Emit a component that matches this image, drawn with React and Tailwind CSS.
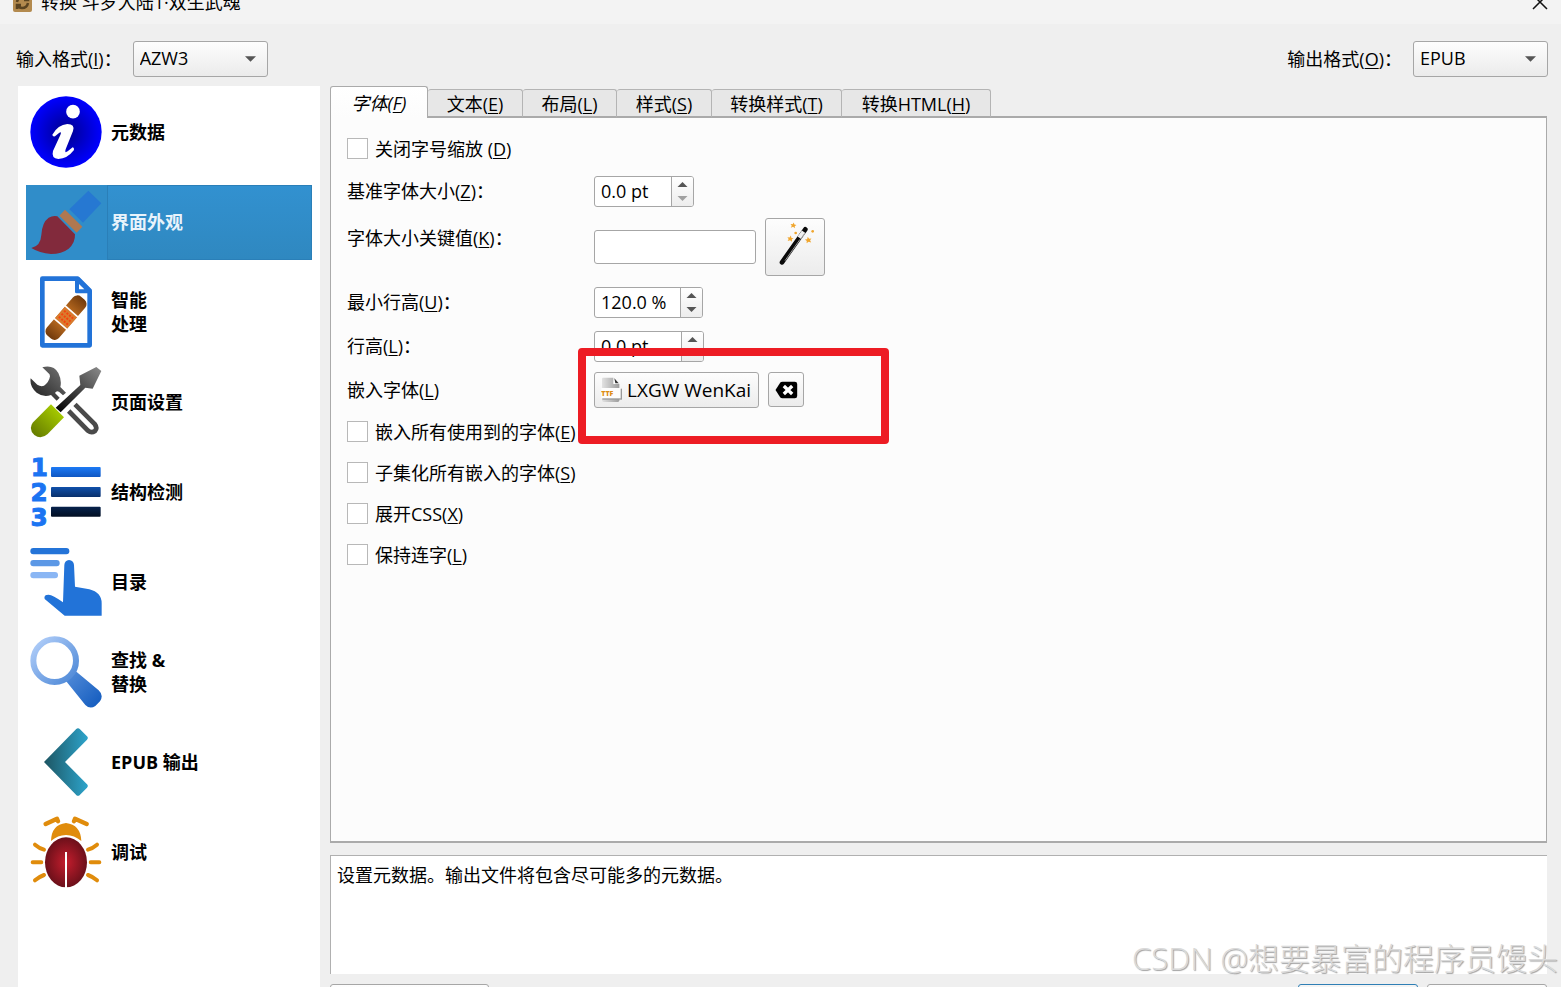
import React, { useState } from "react";

const Key = ({ children }) => (
  <span className="underline decoration-1 underline-offset-2">{children}</span>
);

const InfoIcon = () => (
  <svg viewBox="90 288 216 216" className="size-[72px] shrink-0" aria-hidden="true">
    <defs>
      <radialGradient id="info">
        <stop offset="0" stopColor="#00008c" />
        <stop offset="1" stopColor="#0000ff" />
      </radialGradient>
    </defs>
    <circle cx="198" cy="396" r="107" fill="url(#info)" />
    <circle cx="219" cy="335" r="20.500" fill="#fff" />
    <path
      fill="#fff"
      d="M157 404Q174 374 202 372Q226 372 219 393L197 448Q193 461 203 454L218 442Q223 442 222 450Q202 476 175 477Q153 475 159 453L181 405Q186 392 177 399L165 409Q158 411 157 404Z"
    />
  </svg>
);

const BrushIcon = () => (
  <svg viewBox="42 33 216 216" className="size-[72px] shrink-0" aria-hidden="true">
    <path fill="#822a3c" d="M46 219Q74 213 76 180Q78 142 98 128Q111 121 124 124L177 178Q178 204 158 221Q137 237 105 237Q70 234 46 219Z" />
    <path fill="#b07850" d="M147 104L199 155L182 173L130 122Z" />
    <path fill="#2678d2" d="M217 47L256 85L201 143L160 103Z" />
  </svg>
);

const BandageIcon = () => (
  <svg viewBox="42 303 216 216" className="size-[72px] shrink-0" aria-hidden="true">
    <defs>
      <linearGradient id="band">
        <stop offset="0" stopColor="#713a0c" />
        <stop offset="0.350" stopColor="#b8691f" />
        <stop offset="0.650" stopColor="#b8691f" />
        <stop offset="1" stopColor="#713a0c" />
      </linearGradient>
    </defs>
    <path fill="none" stroke="#2273d8" strokeWidth="14" strokeLinejoin="round" d="M79 311H185L221 347V511H79Z" />
    <path fill="#2273d8" d="M177 308H190L226 344V355H182Q177 355 177 350Z" />
    <path fill="#fff" d="M189 327L205 343H189Z" />
    <g transform="translate(150 428) rotate(-49)">
      <rect x="-77" y="-24" width="154" height="48" rx="17" fill="url(#band)" />
      <rect x="-24" y="-24" width="48" height="48" fill="#d97b2e" />
      <path stroke="#fff" strokeWidth="5" d="M-25 -26V26M25 -26V26" />
      <g stroke="#f4430e" strokeWidth="6" strokeDasharray="6 6">
        <path d="M-15 -15H15" />
        <path d="M-15 -5H17" />
        <path d="M-15 5H15" />
        <path d="M-15 15H17" />
      </g>
    </g>
  </svg>
);

const ToolsIcon = () => (
  <svg viewBox="42 33 216 216" className="size-[72px] shrink-0" aria-hidden="true">
    <defs>
      <linearGradient id="steel" x1="0" y1="1" x2="1" y2="0">
        <stop offset="0" stopColor="#1c1c1c" />
        <stop offset="1" stopColor="#777" />
      </linearGradient>
      <linearGradient id="blade" x1="0" y1="1" x2="1" y2="0">
        <stop offset="0" stopColor="#000" />
        <stop offset="0.450" stopColor="#3c3c3c" />
        <stop offset="1" stopColor="#8c8c8c" />
      </linearGradient>
      <linearGradient id="grip" x1="1" y1="0" x2="0" y2="1">
        <stop offset="0" stopColor="#b4dc00" />
        <stop offset="1" stopColor="#5f7400" />
      </linearGradient>
    </defs>
    <path fill="url(#steel)" d="M79 37Q112 28 127 54Q138 76 133 96L150 113L141 121L129 110Q121 106 117 114L131 128L122 137L105 120Q82 128 62 113Q40 94 44 70L64 89Q75 96 84 92Q99 82 102 64Q102 57 96 53Z" />
    <path fill="none" stroke="#4a4a4a" strokeWidth="14" d="M177 148L236 207Q245 219 237 228Q226 235 216 227L158 168" />
    <path fill="url(#blade)" d="M190 62L241 36L256 48L230 101L208 98L134 172L119 158L193 90Z" />
    <path fill="url(#grip)" d="M105 148L144 187L95 237Q75 255 55 240Q37 222 50 203Z" />
  </svg>
);

const StructureIcon = () => (
  <svg viewBox="42 303 216 216" className="size-[72px] shrink-0 overflow-visible" aria-hidden="true">
    <defs>
      <linearGradient id="barA" x1="0" y1="0" x2="0" y2="1">
        <stop offset="0" stopColor="#1c7af5" />
        <stop offset="1" stopColor="#0f57c2" />
      </linearGradient>
      <linearGradient id="barB" x1="0" y1="0" x2="0" y2="1">
        <stop offset="0" stopColor="#1050aa" />
        <stop offset="1" stopColor="#09306c" />
      </linearGradient>
      <linearGradient id="barC" x1="0" y1="0" x2="0" y2="1">
        <stop offset="0" stopColor="#06224c" />
        <stop offset="1" stopColor="#020e22" />
      </linearGradient>
    </defs>
    <g fill="#1b74f2" stroke="#1b74f2" strokeWidth="3" fontFamily="'DejaVu Sans', sans-serif" fontWeight="700" fontSize="74" textAnchor="middle">
      <text x="70" y="364">1</text>
      <text x="69" y="438">2</text>
      <text x="69" y="512">3</text>
    </g>
    <rect x="105" y="336" width="149" height="30" rx="3" fill="url(#barA)" />
    <rect x="105" y="396" width="149" height="30" rx="3" fill="url(#barB)" />
    <rect x="105" y="455" width="149" height="30" rx="3" fill="url(#barC)" />
  </svg>
);

const TocIcon = () => (
  <svg viewBox="42 33 216 216" className="size-[72px] shrink-0" aria-hidden="true">
    <rect x="43" y="39" width="117" height="19" rx="9" fill="#2474d8" />
    <rect x="43" y="75" width="88" height="19" rx="9" fill="#5c98e6" />
    <rect x="43" y="111" width="83" height="19" rx="9" fill="#8ab6f4" />
    <path fill="#2273d8" d="M145 90Q146 76 159 75Q173 76 174 90L177 155L220 163Q257 172 257 205V242H146L86 192Q82 179 98 179Q110 179 141 202Z" />
  </svg>
);

const SearchIcon = () => (
  <svg viewBox="42 303 216 216" className="size-[72px] shrink-0" aria-hidden="true">
    <defs>
      <linearGradient id="ring" x1="0" y1="0" x2="1" y2="1">
        <stop offset="0" stopColor="#b4d0fa" />
        <stop offset="1" stopColor="#4a86d6" />
      </linearGradient>
      <linearGradient id="handle" x1="0" y1="0" x2="1" y2="1">
        <stop offset="0" stopColor="#5a92dc" />
        <stop offset="1" stopColor="#1059bd" />
      </linearGradient>
    </defs>
    <path fill="url(#handle)" d="M170 400L183 412L248 466Q264 481 252 499L238 513Q222 524 208 510L153 442L140 428Z" />
    <circle cx="116" cy="377" r="64" fill="#fff" stroke="url(#ring)" strokeWidth="18" />
  </svg>
);

const OutputIcon = () => (
  <svg viewBox="42 33 216 216" className="size-[72px] shrink-0" aria-hidden="true">
    <defs>
      <linearGradient id="arrow">
        <stop offset="0" stopColor="#1d5562" />
        <stop offset="1" stopColor="#2da4cb" />
      </linearGradient>
    </defs>
    <path fill="url(#arrow)" d="M84 141L180 43Q186 36 192 43L213 64Q218 69 213 74L147 141L213 208Q218 213 213 218L192 239Q186 246 180 239Z" />
  </svg>
);

const BugIcon = () => (
  <svg viewBox="42 303 216 216" className="size-[72px] shrink-0" aria-hidden="true">
    <defs>
      <radialGradient id="bug">
        <stop offset="0" stopColor="#c41d2d" />
        <stop offset="1" stopColor="#6c101a" />
      </radialGradient>
    </defs>
    <g fill="none" stroke="#e08c0c" strokeWidth="13" strokeLinecap="round" strokeLinejoin="round">
      <path d="M89 327L123 311L126 319M212 327L177 311L174 319" />
      <g strokeWidth="12">
        <path d="M57 389Q70 400 84 404M50 442H76M57 496Q70 485 84 480" />
        <path d="M243 389Q230 400 216 404M250 442H224M243 496Q230 485 216 480" />
      </g>
    </g>
    <path fill="#e08c0c" d="M105 378Q106 329 150 324Q194 329 196 378Q175 360 150 360Q125 360 105 378Z" />
    <ellipse cx="150" cy="442" rx="67" ry="79" fill="#fff" />
    <ellipse cx="150" cy="442" rx="63" ry="75" fill="url(#bug)" />
    <path stroke="#fff" strokeWidth="6" d="M150 411V519" />
  </svg>
);

const star = "M0 -10L3 -3L10 -3L5 2L7 9L0 5L-7 9L-5 2L-10 -3L-3 -3Z";

const WandIcon = () => (
  <svg viewBox="603 159 144 144" className="size-12 overflow-visible" aria-hidden="true">
    <path stroke="#0a0a0a" strokeWidth="14" strokeLinecap="round" d="M636 277L706 178" />
    <path stroke="#eee" strokeWidth="13" d="M688 203L701 185" />
    <path stroke="#999" strokeWidth="3" d="M645 272L690 208M693 206L704 190" />
    <g fill="#f0a62e">
      <path transform="translate(670 166) rotate(10) scale(.9)" d={star} />
      <path transform="translate(661 206) rotate(10) scale(.95)" d={star} />
      <path transform="translate(715 210) rotate(-10)" d={star} />
      <circle cx="677" cy="189" r="4" />
      <circle cx="728" cy="184" r="4" />
    </g>
  </svg>
);

const TtfIcon = () => (
  <svg viewBox="94 622 66 78" className="h-[26px] w-[22px] shrink-0" aria-hidden="true">
    <defs>
      <linearGradient id="sheet">
        <stop offset="0" stopColor="#e2e2e2" />
        <stop offset="1" stopColor="#9c9c9c" />
      </linearGradient>
    </defs>
    <path fill="url(#sheet)" d="M97 627Q97 624 100 624H131L149 643V692Q149 697 144 697H102Q97 697 97 692Z" />
    <path fill="#fff" d="M131 624L149 643H131Z" />
    <path fill="#333" d="M134 626L147 641H137Z" />
    <path fill="#999" d="M98 657H157V690H98Z" />
    <path fill="#fdfdfd" d="M95 655H153V686H95Z" />
    <text x="95" y="678" fill="#dd8d14" fontFamily="'Open Sans', sans-serif" fontWeight="800" fontSize="21">TTF</text>
  </svg>
);

const ClearIcon = () => (
  <svg viewBox="615 630 68 54" className="h-[18px] w-[23px]" aria-hidden="true">
    <path d="M616 657L630 635Q632 632 637 632H674Q681 632 681 639V675Q681 682 674 682H637Q632 682 630 679Z" />
    <path stroke="#fff" strokeWidth="10" d="M641 645L666 669M666 645L641 669" />
  </svg>
);

const AppIcon = () => (
  <svg viewBox="0 0 20 20" className="size-5" aria-hidden="true">
    <rect width="19" height="20" rx="2" fill="#b38a4e" />
    <path fill="none" stroke="#5a4320" strokeWidth="2.500" d="M4 10Q5 5 10 5Q13 5 15 8M15 4V8H11M15 11Q14 16 9 16Q6 16 4 13M4 17V13H8" />
  </svg>
);

const sections = [
  { label: "元数据", Icon: InfoIcon },
  { label: "界面外观", Icon: BrushIcon },
  { label: "智能\n处理", Icon: BandageIcon },
  { label: "页面设置", Icon: ToolsIcon },
  { label: "结构检测", Icon: StructureIcon },
  { label: "目录", Icon: TocIcon },
  { label: "查找 &\n替换", Icon: SearchIcon },
  { label: "EPUB 输出", Icon: OutputIcon },
  { label: "调试", Icon: BugIcon },
];

const tabs = [
  { name: "字体", key: "F", width: "w-[98px]" },
  { name: "文本", key: "E", width: "w-[95px]" },
  { name: "布局", key: "L", width: "w-[94px]" },
  { name: "样式", key: "S", width: "w-[95px]" },
  { name: "转换样式", key: "T", width: "w-[130px]" },
  { name: "转换HTML", key: "H", width: "w-[149px]" },
];

function FormatSelect({ id, name, letter, value }) {
  return (
    <div className="flex items-center gap-[11px]">
      <label htmlFor={id}>
        {name}(<Key>{letter}</Key>)：
      </label>
      <div className="relative">
        <select
          id={id}
          defaultValue={value}
          className="h-9 w-[135px] appearance-none rounded-[3px] border border-[#a6a6a6] bg-linear-to-b from-[#fdfdfd] to-[#ebebeb] pb-0.5 pl-[6px] outline-none"
        >
          <option>{value}</option>
        </select>
        <svg viewBox="0 0 10 5" className="pointer-events-none absolute top-[15px] right-3 h-[6px] w-[11px]" aria-hidden="true">
          <path fill="#555" d="M0 0H10L5 5Z" />
        </svg>
      </div>
    </div>
  );
}

function Spin({ id, value, width, atMinimum }) {
  return (
    <div className={`flex h-[31px] overflow-hidden rounded-[3px] border border-[#a6a6a6] bg-white ${width}`}>
      <input id={id} defaultValue={value} className="min-w-0 flex-1 pb-0.5 pl-[6px] outline-none" />
      <div className="flex w-[22px] flex-col border-l border-[#a6a6a6] bg-linear-to-b from-white to-[#ededed] py-px">
        <button type="button" aria-label="增加" className="flex flex-1 items-center justify-center">
          <svg viewBox="0 0 10 5" className="h-[5px] w-[11px]" aria-hidden="true">
            <path fill="#555" d="M0 5H10L5 0Z" />
          </svg>
        </button>
        <button type="button" aria-label="减少" className="flex flex-1 items-center justify-center">
          <svg viewBox="0 0 10 5" className="h-[5px] w-[11px]" aria-hidden="true">
            <path fill={atMinimum ? "#a0a0a0" : "#555"} d="M0 0H10L5 5Z" />
          </svg>
        </button>
      </div>
    </div>
  );
}

function Check({ name, letter }) {
  return (
    <label className="flex h-[21px] items-center gap-[7px] whitespace-nowrap">
      <input type="checkbox" className="size-[21px] appearance-none border border-[#b8b8b8] bg-white checked:bg-[#3390cd]" />
      <span>
        {name}(<Key>{letter}</Key>)
      </span>
    </label>
  );
}

function FieldLabel({ id, name, letter, colon = "：", className = "pb-0.5" }) {
  return (
    <label htmlFor={id} className={`w-[247px] shrink-0 ${className}`}>
      {name}(<Key>{letter}</Key>){colon}
    </label>
  );
}

export default function App() {
  const [section, setSection] = useState(1);
  const [tab, setTab] = useState(0);
  const raised = "rounded-[3px] border border-[#a6a6a6] bg-linear-to-b from-[#fdfdfd] to-[#ececec]";

  return (
    <div className="relative flex h-screen flex-col overflow-hidden bg-[#efefef] font-['Open_Sans','Noto_Sans_CJK_SC',sans-serif] text-[18px] leading-6 text-black">
      <header className="-mt-5 flex h-11 shrink-0 items-center bg-[#f3f3f3] px-[13px]">
        <AppIcon />
        <h1 className="flex-1 pl-2">转换 斗罗大陆1·双生武魂</h1>
        <button type="button" aria-label="关闭">
          <svg viewBox="0 0 16 16" className="size-4" aria-hidden="true">
            <path fill="none" stroke="#111" strokeWidth="1.500" d="M1 1L15 15M15 1L1 15" />
          </svg>
        </button>
      </header>

      <div className="flex shrink-0 justify-between pt-[17px] pr-[13px] pb-[9px] pl-4">
        <FormatSelect id="input-format" name="输入格式" letter="I" value="AZW3" />
        <FormatSelect id="output-format" name="输出格式" letter="O" value="EPUB" />
      </div>

      <div className="flex min-h-0 flex-1 gap-[10px] pr-[14px] pl-[18px]">
        <nav className="flex w-[302px] shrink-0 flex-col gap-[15px] bg-white px-2 pt-[9px]">
          {sections.map(({ label, Icon }, i) => {
            const active = i === section;
            return (
              <button
                key={label}
                type="button"
                onClick={() => setSection(i)}
                className={`flex h-[75px] shrink-0 text-left font-bold whitespace-pre ${active ? "bg-[#308dc9] text-[#e8f3fb]" : ""}`}
              >
                <span className="w-[81px] shrink-0 pt-px pl-1">
                  <Icon />
                </span>
                <span
                  className={`flex flex-1 items-center self-stretch border pb-0.5 pl-[3px] ${
                    active ? "border-[#2a7fb8] bg-linear-to-b from-[#3291d0] to-[#2f88c0]" : "border-transparent"
                  }`}
                >
                  {label}
                </span>
              </button>
            );
          })}
        </nav>

        <main className="flex min-w-0 flex-1 flex-col">
          <div role="tablist" className="flex h-8 shrink-0 items-end">
            {tabs.map(({ name, key, width }, i) => {
              const active = i === tab;
              return (
                <button
                  key={key}
                  type="button"
                  role="tab"
                  aria-selected={active}
                  onClick={() => setTab(i)}
                  className={`rounded-t-[3px] border-t border-r whitespace-nowrap ${width} ${
                    active
                      ? "z-10 h-8 border-l border-[#aaaaaa] bg-linear-to-b from-white to-[#fcfcfc] italic"
                      : "h-[29px] border-b-2 border-[#b4b4b4] border-b-[#aaaaaa] bg-[#e7e7e7] pt-0.5"
                  }`}
                >
                  {name}(<Key>{key}</Key>)
                </button>
              );
            })}
            <div className="h-[2px] flex-1 bg-[#aaaaaa]" />
          </div>

          <section role="tabpanel" className="flex min-h-0 flex-1 flex-col border-x border-b-2 border-[#aaaaaa] bg-[#fcfcfc] px-4 pt-5">
            <Check name="关闭字号缩放 " letter="D" />
            <div className="mt-[17px] flex items-center">
              <FieldLabel id="base-size" name="基准字体大小" letter="Z" />
              <Spin id="base-size" value="0.0 pt" width="w-[100px]" atMinimum />
            </div>
            <div className="mt-[11px] flex items-center">
              <FieldLabel id="size-key" name="字体大小关键值" letter="K" className="self-start pt-2" />
              <input id="size-key" className="h-[34px] w-[162px] rounded-[3px] border border-[#a6a6a6] bg-white px-[6px] outline-none" />
              <button type="button" aria-label="字体大小向导" className={`ml-[9px] flex h-[58px] w-[60px] items-center justify-center ${raised}`}>
                <WandIcon />
              </button>
            </div>
            <div className="mt-[11px] flex items-center">
              <FieldLabel id="min-height" name="最小行高" letter="U" />
              <Spin id="min-height" value="120.0 %" width="w-[109px]" />
            </div>
            <div className="mt-[13px] flex items-center">
              <FieldLabel id="line-height" name="行高" letter="L" />
              <Spin id="line-height" value="0.0 pt" width="w-[110px]" atMinimum />
            </div>
            <div className="relative mt-[10px] flex items-center">
              <FieldLabel id="embed-font" name="嵌入字体" letter="L" colon="" className="" />
              <button id="embed-font" type="button" className={`flex h-9 w-[165px] items-center gap-1 pl-[6px] text-[19px] whitespace-nowrap ${raised}`}>
                <TtfIcon />
                LXGW WenKai
              </button>
              <button type="button" aria-label="清除" className={`ml-[9px] flex h-[35px] w-9 items-center justify-center self-start ${raised}`}>
                <ClearIcon />
              </button>
              <div className="pointer-events-none absolute -top-6 left-[231px] h-[96px] w-[311px] rounded-[4px] border-8 border-[#ed1c24]" />
            </div>
            <div className="mt-[13px] flex flex-col gap-5">
              <Check name="嵌入所有使用到的字体" letter="E" />
              <Check name="子集化所有嵌入的字体" letter="S" />
              <Check name="展开CSS" letter="X" />
              <Check name="保持连字" letter="L" />
            </div>
          </section>

          <p className="mt-3 h-[119px] shrink-0 border-t border-l border-[#b0b0b0] bg-white px-[6px] pt-[7px]">
            设置元数据。输出文件将包含尽可能多的元数据。
          </p>

          <footer className="mt-[10px] -mb-8 flex h-[35px] shrink-0">
            <button type="button" aria-label="恢复默认值" className={`w-[159px] ${raised}`} />
            <button type="button" aria-label="确定" className="ml-auto w-[120px] rounded-[3px] border border-[#2f7fb5] bg-[#f4f4f4]" />
            <button type="button" aria-label="取消" className={`ml-[9px] w-[120px] ${raised}`} />
          </footer>
        </main>
      </div>

      <div className="pointer-events-none absolute right-[3px] bottom-[9px] text-[31px] leading-10 font-light whitespace-nowrap text-[#dadada] [text-shadow:1px_1px_1px_#a0a0a0]">
        CSDN @想要暴富的程序员馒头
      </div>
    </div>
  );
}
